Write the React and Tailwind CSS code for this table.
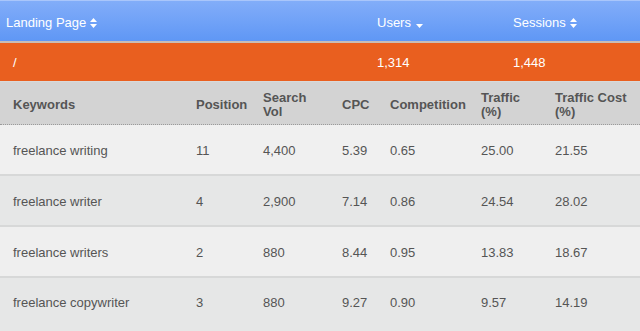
import React from "react";

const cols = ["w-[183px]", "w-[67px]", "w-[79px]", "w-[48px]", "w-[91px]", "w-[74px]", "w-[98px]"];

const rows = [
  ["freelance writing", "11", "4,400", "5.39", "0.65", "25.00", "21.55"],
  ["freelance writer", "4", "2,900", "7.14", "0.86", "24.54", "28.02"],
  ["freelance writers", "2", "880", "8.44", "0.95", "13.83", "18.67"],
  ["freelance copywriter", "3", "880", "9.27", "0.90", "9.57", "14.19"],
];

const rowBg = ["bg-[#f0f0f0]", "bg-[#e6e7e7]", "bg-[#efefef]", "bg-[#e6e7e7]"];
const rowCls = ["h-[51px] pt-[2px] border-b-2 border-[#d7d8d8]", "h-[51px] pt-[2px] border-b-2 border-[#d7d8d8]", "h-[51px] pt-[2px] border-b-2 border-[#d7d8d8]", "h-[53px] pb-[4px]"];

function SortBoth() {
  return (
    <svg width="7" height="10" viewBox="0 0 7 10" className="ml-[4px] inline-block">
      <polygon points="0,4 3.5,0 7,4" fill="white" />
      <polygon points="0,6 3.5,10 7,6" fill="white" />
    </svg>
  );
}

function SortDown() {
  return (
    <svg width="7" height="4" viewBox="0 0 7 4" className="ml-[5px] mt-[6px] inline-block">
      <polygon points="0,0 3.5,4 7,0" fill="white" />
    </svg>
  );
}

export default function App() {
  return (
    <div className="w-[640px] h-[331px] overflow-hidden bg-[#e6e7e7] text-[13px] font-['Liberation_Sans',Arial,sans-serif]">
      <div className="h-[41px] pt-[3px] bg-gradient-to-b from-[#82adf9] to-[#5f97f5] border-t border-[#a9c6fb] flex items-center text-white">
        <div className="w-[371px] pl-[6px] flex items-center">Landing Page<SortBoth /></div>
        <div className="w-[136px] pl-[6px] flex items-center">Users<SortDown /></div>
        <div className="flex-1 pl-[6px] flex items-center">Sessions<SortBoth /></div>
      </div>
      <div className="h-[2px] bg-[#c9bdb6]" />
      <div className="h-[38px] pt-[2px] bg-[#e95f1f] flex items-center text-white">
        <div className="w-[377px] pl-[13px]">/</div>
        <div className="w-[136px]">1,314</div>
        <div className="flex-1">1,448</div>
      </div>
      <div className="h-[1px] bg-[#d9d9d9]" />
      <div className="h-[43px] pt-[3px] bg-[#d3d3d3] border-b border-dotted border-[#9a9a9a] flex items-center font-bold text-[#555] leading-[14px]">
        <div className={`${cols[0]} pl-[13px]`}>Keywords</div>
        <div className={`${cols[1]} pl-[13px]`}>Position</div>
        <div className={`${cols[2]} pl-[13px]`}>Search<br />Vol</div>
        <div className={`${cols[3]} pl-[13px]`}>CPC</div>
        <div className={`${cols[4]} pl-[13px]`}>Competition</div>
        <div className={`${cols[5]} pl-[13px]`}>Traffic<br />(%)</div>
        <div className={`${cols[6]} pl-[13px]`}>Traffic Cost<br />(%)</div>
      </div>
      {rows.map((r, i) => (
        <div key={i} className={`${rowCls[i]} ${rowBg[i]} flex items-center text-[#555]`}>
          {r.map((c, j) => (
            <div key={j} className={`${cols[j]} pl-[13px] text-[#555]`}>{c}</div>
          ))}
        </div>
      ))}
    </div>
  );
}
